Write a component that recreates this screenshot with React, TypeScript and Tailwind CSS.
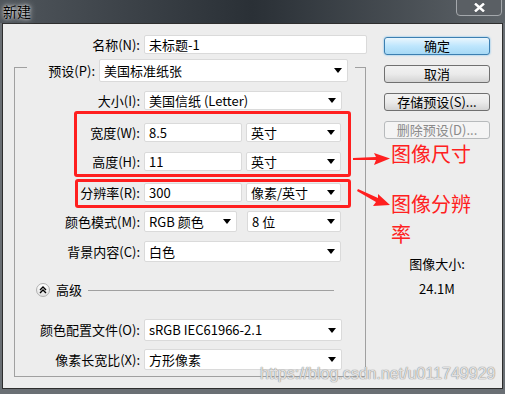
import React from "react";

const FONT = { fontFamily: '"Noto Sans CJK SC", "Noto Sans", sans-serif' };

function Tri() {
  return (
    <svg width="8" height="5" viewBox="0 0 8 5" className="shrink-0">
      <path d="M0 0 H8 L4 5 Z" fill="#000" />
    </svg>
  );
}

function Field({ w, h, text, drop }: { w: number; h: number; text: string; drop?: boolean }) {
  return (
    <div
      className="flex items-center bg-white border border-[#dadada] rounded-[2px] pl-[4px] pr-[5px] text-[13px] text-black shrink-0"
      style={{ width: w, height: h }}
    >
      <span className="flex-1 whitespace-nowrap leading-[16px]">{text}</span>
      {drop && <Tri />}
    </div>
  );
}

function Row({ label, mt, h, children, lw = 125 }: { label: string; mt: number; h: number; children: React.ReactNode; lw?: number }) {
  return (
    <div className="flex items-center" style={{ marginTop: mt, height: h }}>
      <div className="text-right text-[13px] leading-[16px] whitespace-nowrap shrink-0" style={{ width: lw }}>
        {label}
      </div>
      <div className="flex items-center ml-[4px]">{children}</div>
    </div>
  );
}

function Btn({ children, primary, disabled }: { children: React.ReactNode; primary?: boolean; disabled?: boolean }) {
  let cls =
    "h-[18px] w-[106px] flex items-center justify-center text-[13px] leading-[16px] rounded-[3px] border ";
  if (primary) cls += "border-[#3c7fb1] bg-gradient-to-b from-[#eaf6fd] via-[#bee6fd] to-[#a7d9f5] shadow-[0_0_2px_#5cb5ef] text-black";
  else if (disabled) cls += "border-[#b7babc] bg-[#f4f4f4] text-[#8a8a8a]";
  else cls += "border-[#707070] bg-gradient-to-b from-[#f2f2f2] via-[#ebebeb] to-[#d4d4d4] text-black";
  return <div className={cls}>{children}</div>;
}

export default function App() {
  return (
    <div className="relative w-[505px] h-[394px] overflow-hidden bg-[#6a6f74]" style={FONT}>
      {/* title bar */}
      <div className="h-[23px] relative bg-gradient-to-r from-[#50565c] via-[#2a3036] to-[#5e6469]">
        <div
          className="absolute left-[3px] top-[2px] text-[14px] leading-[18px] text-black"
          style={{ textShadow: "0 0 6px rgba(255,255,255,0.9), 0 0 3px rgba(255,255,255,0.8)" }}
        >
          新建
        </div>
        <div className="absolute right-[3px] top-[-2px] w-[46px] h-[18px] rounded-b-[4px] border border-[#a4a8ac] bg-[#5a5f64] flex items-center justify-center">
          <svg width="11" height="9" viewBox="0 0 11 9">
            <path d="M1 0.5 L10 8.5 M10 0.5 L1 8.5" stroke="#fff" strokeWidth="2.4" />
          </svg>
        </div>
      </div>

      {/* body */}
      <div className="ml-[2px] w-[501px] h-[366px] bg-[#ededed] border border-[#2e2e2e] flex items-start">
        {/* left column */}
        <div className="w-[364px] flex flex-col shrink-0">
          <div className="flex items-center mt-[11px] h-[19px]">
            <div className="w-[137px] text-right text-[13px] leading-[16px]">名称(N):</div>
            <div className="ml-[4px]">
              <Field w={223} h={19} text="未标题-1" />
            </div>
          </div>

          {/* group box */}
          <div className="ml-[11px] w-[352px] flex flex-col mt-[5px]">
            <div className="flex items-end h-[23px]">
              <div className="w-[13px] h-[15px] border-t border-l border-[#a0a0a0] self-end" />
              <div className="w-[68px] self-center text-right text-[13px] leading-[16px]">预设(P):</div>
              <div className="ml-[4px] self-stretch">
                <Field w={249} h={23} text="美国标准纸张" drop />
              </div>
              <div className="w-[7px]" />
              <div className="w-[11px] h-[15px] border-t border-r border-[#a0a0a0] self-end" />
            </div>
            <div className="border-l border-r border-b border-[#a0a0a0] pb-[6px] flex flex-col">
              <Row label="大小(I):" mt={9} h={19}>
                <Field w={198} h={19} text="美国信纸 (Letter)" drop />
              </Row>
              <Row label="宽度(W):" mt={13} h={19}>
                <Field w={98} h={19} text="8.5" />
                <div className="w-[4px]" />
                <Field w={95} h={19} text="英寸" drop />
              </Row>
              <Row label="高度(H):" mt={10} h={19}>
                <Field w={98} h={19} text="11" />
                <div className="w-[4px]" />
                <Field w={95} h={19} text="英寸" drop />
              </Row>
              <Row label="分辨率(R):" mt={12} h={19}>
                <Field w={98} h={19} text="300" />
                <div className="w-[4px]" />
                <Field w={95} h={19} text="像素/英寸" drop />
              </Row>
              <Row label="颜色模式(M):" mt={9} h={21}>
                <Field w={93} h={21} text="RGB 颜色" drop />
                <div className="w-[10px]" />
                <Field w={94} h={21} text="8 位" drop />
              </Row>
              <Row label="背景内容(C):" mt={9} h={21}>
                <Field w={197} h={21} text="白色" drop />
              </Row>
              <div className="flex items-center mt-[21px] h-[14px]">
                <div className="ml-[21px] w-[14px] h-[14px] rounded-full border border-[#b0b0b0] bg-gradient-to-b from-white to-[#e0e0e0] flex items-center justify-center">
                  <svg width="8" height="8" viewBox="0 0 8 8">
                    <path d="M1 4 L4 1 L7 4 M1 7 L4 4 L7 7" stroke="#000" strokeWidth="1.4" fill="none" />
                  </svg>
                </div>
                <div className="ml-[6px] text-[13px] leading-[16px]">高级</div>
                <div className="ml-[6px] w-[246px] h-px bg-[#a0a0a0]" />
              </div>
              <Row label="颜色配置文件(O):" mt={22} h={22}>
                <Field w={198} h={22} text="sRGB IEC61966-2.1" drop />
              </Row>
              <Row label="像素长宽比(X):" mt={8} h={21}>
                <Field w={198} h={21} text="方形像素" drop />
              </Row>
            </div>
          </div>
        </div>

        {/* right column */}
        <div className="ml-[17px] mt-[13px] w-[106px] flex flex-col gap-[10px]">
          <Btn primary>确定</Btn>
          <Btn>取消</Btn>
          <Btn>存储预设(S)...</Btn>
          <Btn disabled>删除预设(D)...</Btn>
          <div className="mt-[106px] text-center text-[13px] leading-[18px]">图像大小:</div>
          <div className="-mt-[3px] text-center text-[13px] leading-[18px]">24.1M</div>
        </div>
      </div>

      {/* annotations */}
      <div className="absolute left-[74px] top-[111px] w-[277px] h-[66px] border-[3px] border-[#ff1f1f] rounded-[3px]" />
      <div className="absolute left-[75px] top-[179px] w-[276px] h-[29px] border-[3px] border-[#ff1f1f] rounded-[3px]" />
      <svg className="absolute left-[340px] top-[140px]" width="60" height="80" viewBox="0 0 60 80">
        <path d="M13 18 L36 17 L34 13 L50 18.5 L34 25 L36 20 L13 20 Z" fill="#ff1f1f" />
        <path d="M18 49 L38 58 L38 54 L50 65 L33 66 L36 62 L17 51 Z" fill="#ff1f1f" />
      </svg>
      <div className="absolute left-[391px] top-[139px] text-[20px] leading-[30px] text-[#ff2020]">图像尺寸</div>
      <div className="absolute left-[391px] top-[189px] text-[20px] leading-[30px] text-[#ff2020]">
        图像分辨
        <br />
        率
      </div>
      <div
        className="absolute left-[260px] top-[364px] text-[16px] leading-[20px] whitespace-nowrap text-[rgba(255,255,255,0.75)]"
        style={{ fontFamily: '"Liberation Sans", Arial, sans-serif', textShadow: "0 0 1px #888, 0 0 1px #888" }}
      >
        https://blog.csdn.net/u011749929
      </div>
    </div>
  );
}
